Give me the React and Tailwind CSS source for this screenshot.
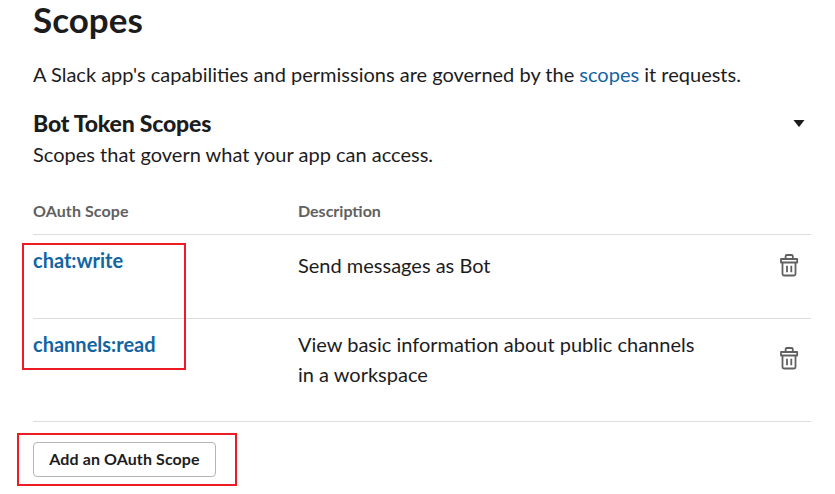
function Trash() {
  return (
    <svg className="block h-6 w-5" viewBox="0 0 20 24" fill="none" stroke="#616061" strokeWidth="1.8" strokeLinejoin="round">
      <path d="M2.500 9.800V21q0 1.500 1.500 1.500h10q1.500 0 1.500-1.500V9.800M1 6h16.200v3.500H1zM5.600 6V3.200q0-1.200 1.200-1.200h4.800q1.200 0 1.200 1.200V6M7 12.800v6.400M11.300 12.800v6.400" />
    </svg>
  );
}
export default function App() {
  return (
    <main className="relative h-[494px] w-[835px] overflow-hidden bg-white pl-[33px] font-[Lato,sans-serif] text-[#1d1c1d]">
      <h1 className="h-[59px] text-[35px] leading-[38px] font-bold">Scopes</h1>
      <p className="h-[48px] text-[20px] leading-[30px] whitespace-nowrap">A Slack app's capabilities and permissions are governed by the <a className="text-[#1264a3]">scopes</a> it requests.</p>
      <div className="flex h-[32px] w-[778px] items-center justify-between">
        <h2 className="text-[23px] leading-[32px] font-black tracking-[-0.2px]">Bot Token Scopes</h2>
        <svg className="mr-[6px] h-[7px] w-3" viewBox="0 0 12 7"><path d="M0.500 0h11L6.500 6.500q-.5.500-1 0z" fill="#1d1c1d" /></svg>
      </div>
      <p className="h-[57px] text-[20px] leading-[30px]">Scopes that govern what your app can access.</p>
      <div className="flex h-[39px] w-[778px] border-b border-[#dddddd] text-[16px] leading-[30px] font-bold text-[#616061]"><div className="w-[265px] tracking-[0.1px]">OAuth Scope</div><div>Description</div></div>
      <div className="flex h-[84px] w-[778px] border-b border-[#dddddd] text-[20px] leading-[30px]">
        <b className="w-[265px] pt-[10px] text-[#1264a3]">chat:write</b><div className="w-[482px] pt-[15px]">Send messages as Bot</div><div className="pt-[18px]"><Trash /></div>
      </div>
      <div className="flex h-[103px] w-[778px] border-b border-[#dddddd] text-[20px] leading-[30px]">
        <b className="w-[265px] pt-[10px] text-[#1264a3]">channels:read</b><div className="w-[482px] pt-[10px]">View basic information about public channels<br />in a workspace</div><div className="pt-[27px]"><Trash /></div>
      </div>
      <button className="mt-[20px] block h-[35px] w-[183px] rounded-[4px] border border-[#b5b5b5] pb-[2px] text-[16px] font-bold tracking-[0.1px]">Add an OAuth Scope</button>
      <div className="absolute top-[243px] left-[22px] h-[127px] w-[164px] border-2 border-[#ed1c24]" />
      <div className="absolute top-[433px] left-[17px] h-[53px] w-[220px] border-2 border-[#ed1c24]" />
    </main>
  );
}
